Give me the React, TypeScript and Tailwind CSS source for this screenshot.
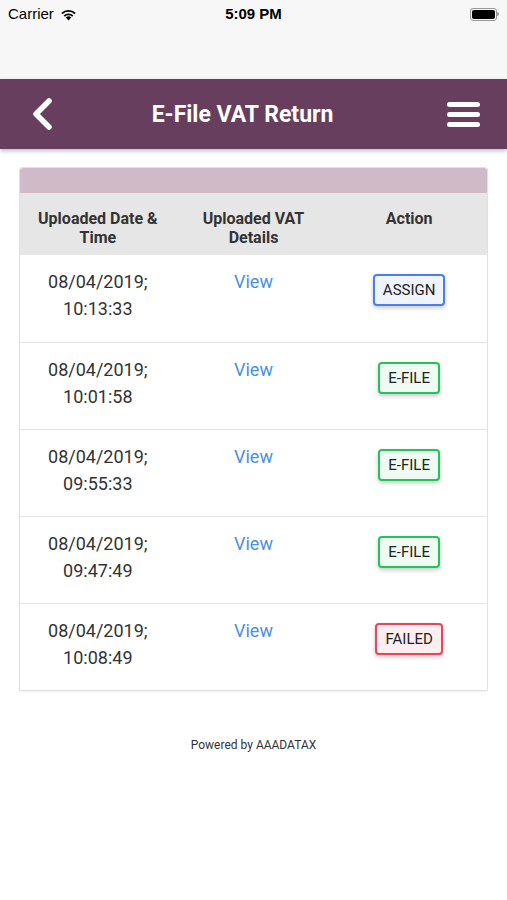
import React from 'react';

type Row = { date: string; time: string; action: 'ASSIGN' | 'E-FILE' | 'FAILED' };

const rows: Row[] = [
  { date: '08/04/2019;', time: '10:13:33', action: 'ASSIGN' },
  { date: '08/04/2019;', time: '10:01:58', action: 'E-FILE' },
  { date: '08/04/2019;', time: '09:55:33', action: 'E-FILE' },
  { date: '08/04/2019;', time: '09:47:49', action: 'E-FILE' },
  { date: '08/04/2019;', time: '10:08:49', action: 'FAILED' },
];

const actionStyles: Record<Row['action'], string> = {
  ASSIGN: 'w-[72px] border-[#4a80e6] bg-[#eef3fc]',
  'E-FILE': 'w-[62px] border-[#22c35a] bg-[#eefaf2]',
  FAILED: 'w-[68px] border-[#e8445e] bg-[#fdeef0]',
};

const StatusBar = () => (
  <div className="h-[79px] bg-[#f7f7f7] font-['Liberation_Sans',sans-serif] text-[15px] text-black">
    <div className="flex items-center justify-between h-[28px] pl-2 pr-[8px]">
      <div className="flex items-center gap-1.5 w-[120px]">
        <span>Carrier</span>
        <svg width="17" height="13" viewBox="0 0 17 13">
          <path d="M8.5 12.5 L5.8 9.6 A3.8 3.8 0 0 1 11.2 9.6 Z" fill="#000" />
          <path d="M3.6 7.4 A7 7 0 0 1 13.4 7.4 L12.1 8.8 A5.1 5.1 0 0 0 4.9 8.8 Z" fill="#000" />
          <path d="M1.2 4.9 A10.4 10.4 0 0 1 15.8 4.9 L14.5 6.3 A8.5 8.5 0 0 0 2.5 6.3 Z" fill="#000" />
        </svg>
      </div>
      <span className="font-semibold">5:09 PM</span>
      <div className="flex items-center justify-end w-[120px]">
        <div className="w-[27px] h-[13px] rounded-[3px] border border-[#999] p-[1px]">
          <div className="w-full h-full rounded-[2px] bg-black" />
        </div>
        <div className="w-[1.5px] h-[4px] bg-[#999] rounded-r-sm" />
      </div>
    </div>
  </div>
);

const NavBar = () => (
  <div className="relative h-[70px] bg-[#673e5e] flex items-center justify-between pl-[30px] pr-[27px] shadow-[0_2px_4px_rgba(0,0,0,0.25)]">
    <svg width="24" height="32" viewBox="0 0 24 32">
      <path d="M19 3 L6 16 L19 29" fill="none" stroke="#fff" strokeWidth="5.5" strokeLinecap="round" strokeLinejoin="round" />
    </svg>
    <h1 className="text-white font-bold text-[23px] font-['Roboto',sans-serif] mr-[16px] mt-[2px]">E-File VAT Return</h1>
    <div className="flex flex-col gap-[5px] w-[33px]">
      <div className="h-[5px] rounded-full bg-white" />
      <div className="h-[5px] rounded-full bg-white" />
      <div className="h-[5px] rounded-full bg-white" />
    </div>
  </div>
);

export default function App() {
  return (
    <div className="min-h-[900px] bg-white font-['Roboto',sans-serif]">
      <StatusBar />
      <NavBar />
      <div className="px-[19px] pt-[18px]">
        <div className="border border-[#e2e2e2] rounded-t-[3px] shadow-[0_1px_2px_rgba(0,0,0,0.06)]">
          <div className="h-[25px] bg-[#d0bac7] rounded-t-[3px] shadow-[0_1px_1px_rgba(0,0,0,0.08)]" />
          <div className="grid grid-cols-3 h-[62px] bg-[#e6e6e6] text-[16px] font-bold text-[#333] leading-[19px] text-center">
            <div className="pt-[16px]">Uploaded Date &amp;<br />Time</div>
            <div className="pt-[16px]">Uploaded VAT<br />Details</div>
            <div className="pt-[16px]">Action</div>
          </div>
          {rows.map((r, i) => (
            <div key={i} className={`grid grid-cols-3 h-[87px] text-center ${i > 0 ? 'border-t border-[#e4e4e4]' : ''}`}>
              <div className="pt-[13px] text-[18px] leading-[27px] text-[#333]">
                {r.date}<br />{r.time}
              </div>
              <div className="pt-[13px] text-[18px] leading-[27px] text-[#4a90e2]">View</div>
              <div className="pt-[19px] flex justify-center items-start">
                <div className={`h-[32px] flex items-center justify-center rounded-[4px] border-2 text-[15px] text-[#222] shadow-[0_2px_4px_rgba(0,0,0,0.22)] ${actionStyles[r.action]}`}>
                  {r.action}
                </div>
              </div>
            </div>
          ))}
        </div>
        <p className="mt-[45px] text-center text-[12px] text-[#333]">Powered by AAADATAX</p>
      </div>
    </div>
  );
}
